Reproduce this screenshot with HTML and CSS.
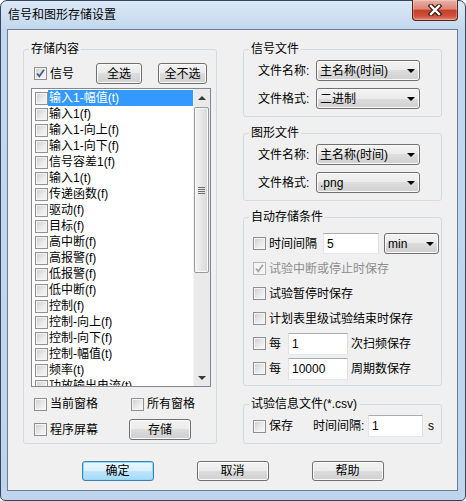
FILE: index.html
```html
<!DOCTYPE html>
<html lang="zh">
<head>
<meta charset="utf-8">
<title>信号和图形存储设置</title>
<link rel="stylesheet" href="styles.css">
</head>
<body>
<div class="window">
  <div class="titlebar">
    <span class="title">信号和图形存储设置</span>
    <div class="close">
      <svg width="14" height="12" viewBox="0 0 14 12"><path d="M3 2 L11 10 M11 2 L3 10" stroke="#3a1712" stroke-width="4.6" stroke-linecap="square" fill="none"/><path d="M3 2 L11 10 M11 2 L3 10" stroke="#fff" stroke-width="2.4" stroke-linecap="square" fill="none"/></svg>
    </div>
  </div>
  <div class="client">
    <div class="main">
      <fieldset class="group left-group">
        <legend>存储内容</legend>
        <div class="sig-row">
          <label class="chk sig-chk"><span class="cb"><svg width="11" height="11" viewBox="0 0 11 11"><path d="M2 5.5 L4.3 8.3 L9 1.8" stroke="#3f5a92" stroke-width="1.7" fill="none"/></svg></span>信号</label>
          <button class="btn btn-all">全选</button>
          <button class="btn btn-none">全不选</button>
        </div>
        <div class="listbox">
          <div class="items">
            <div class="item"><span class="cb"></span><span class="txt sel">输入1-幅值(t)</span></div>
            <div class="item"><span class="cb"></span><span class="txt">输入1(f)</span></div>
            <div class="item"><span class="cb"></span><span class="txt">输入1-向上(f)</span></div>
            <div class="item"><span class="cb"></span><span class="txt">输入1-向下(f)</span></div>
            <div class="item"><span class="cb"></span><span class="txt">信号容差1(f)</span></div>
            <div class="item"><span class="cb"></span><span class="txt">输入1(t)</span></div>
            <div class="item"><span class="cb"></span><span class="txt">传递函数(f)</span></div>
            <div class="item"><span class="cb"></span><span class="txt">驱动(f)</span></div>
            <div class="item"><span class="cb"></span><span class="txt">目标(f)</span></div>
            <div class="item"><span class="cb"></span><span class="txt">高中断(f)</span></div>
            <div class="item"><span class="cb"></span><span class="txt">高报警(f)</span></div>
            <div class="item"><span class="cb"></span><span class="txt">低报警(f)</span></div>
            <div class="item"><span class="cb"></span><span class="txt">低中断(f)</span></div>
            <div class="item"><span class="cb"></span><span class="txt">控制(f)</span></div>
            <div class="item"><span class="cb"></span><span class="txt">控制-向上(f)</span></div>
            <div class="item"><span class="cb"></span><span class="txt">控制-向下(f)</span></div>
            <div class="item"><span class="cb"></span><span class="txt">控制-幅值(t)</span></div>
            <div class="item"><span class="cb"></span><span class="txt">频率(t)</span></div>
            <div class="item"><span class="cb"></span><span class="txt">功放输出电流(t)</span></div>
          </div>
          <div class="vscroll">
            <div class="sb-arrow up"></div>
            <div class="sb-thumb"><span class="grip"></span></div>
            <div class="sb-track"></div>
            <div class="sb-arrow down"></div>
          </div>
        </div>
        <div class="opt-grid">
          <label class="chk"><span class="cb"></span>当前窗格</label>
          <label class="chk"><span class="cb"></span>所有窗格</label>
          <label class="chk"><span class="cb"></span>程序屏幕</label>
          <button class="btn btn-save">存储</button>
        </div>
      </fieldset>

      <div class="right-col">
        <fieldset class="group file-group">
          <legend>信号文件</legend>
          <div class="frow"><span class="flabel">文件名称:</span><div class="select fsel"><span>主名称(时间)</span><span class="arr"></span></div></div>
          <div class="frow"><span class="flabel">文件格式:</span><div class="select fsel"><span>二进制</span><span class="arr"></span></div></div>
        </fieldset>
        <fieldset class="group file-group">
          <legend>图形文件</legend>
          <div class="frow"><span class="flabel">文件名称:</span><div class="select fsel"><span>主名称(时间)</span><span class="arr"></span></div></div>
          <div class="frow"><span class="flabel">文件格式:</span><div class="select fsel"><span>.png</span><span class="arr"></span></div></div>
        </fieldset>
        <fieldset class="group auto-group">
          <legend>自动存储条件</legend>
          <div class="arow">
            <label class="chk w70"><span class="cb"></span>时间间隔</label>
            <div class="input in-time">5</div>
            <div class="select msel"><span>min</span><span class="arr"></span></div>
          </div>
          <div class="arow">
            <label class="chk disabled"><span class="cb"><svg width="11" height="11" viewBox="0 0 11 11"><path d="M2 5.5 L4.3 8.3 L9 1.8" stroke="#a3a3a3" stroke-width="1.7" fill="none"/></svg></span>试验中断或停止时保存</label>
          </div>
          <div class="arow">
            <label class="chk"><span class="cb"></span>试验暂停时保存</label>
          </div>
          <div class="arow">
            <label class="chk"><span class="cb"></span>计划表里级试验结束时保存</label>
          </div>
          <div class="arow">
            <label class="chk w35"><span class="cb"></span>每</label>
            <div class="input in-count">1</div>
            <span class="after">次扫频保存</span>
          </div>
          <div class="arow">
            <label class="chk w35"><span class="cb"></span>每</label>
            <div class="input in-count">10000</div>
            <span class="after">周期数保存</span>
          </div>
        </fieldset>
        <fieldset class="group csv-group">
          <legend>试验信息文件(*.csv)</legend>
          <div class="crow">
            <label class="chk w60"><span class="cb"></span>保存</label>
            <span class="clabel">时间间隔:</span>
            <div class="input in-csv">1</div>
            <span class="unit">s</span>
          </div>
        </fieldset>
      </div>
    </div>
    <div class="actions">
      <button class="btn act default">确定</button>
      <button class="btn act">取消</button>
      <button class="btn act">帮助</button>
    </div>
  </div>
</div>
</body>
</html>
```
FILE: styles.css
```css
body {
  margin: 0;
  background: #ffffff;
  font-family: "Liberation Sans", "Noto Sans CJK SC", sans-serif;
  font-size: 12px;
  line-height: 16px;
  color: #000;
}

.window {
  box-sizing: border-box;
  width: 466px;
  height: 501px;
  border: 1px solid #34475d;
  border-radius: 7px 7px 5px 5px;
  background: linear-gradient(180deg, #dae8f6 0px, #c3d8ee 28px, #bed5ec 100%);
  padding: 0 7px 9px 6px;
  display: flex;
  flex-direction: column;
}

.titlebar {
  height: 28px;
  display: flex;
  justify-content: space-between;
  align-items: flex-start;
}

.title {
  margin: 7px 0 0 1px;
  line-height: 14px;
  font-size: 12px;
  color: #000;
}

.close {
  box-sizing: border-box;
  width: 46px;
  height: 21px;
  margin-top: -1px;
  border: 1px solid #5e2219;
  border-top: none;
  border-radius: 0 0 4px 4px;
  background: linear-gradient(180deg, #e9b1a5 0%, #dc8674 45%, #c4412b 52%, #cf5038 80%, #e08a76 100%);
  box-shadow: inset 0 0 0 1px rgba(255, 255, 255, 0.25);
  display: flex;
  align-items: center;
  justify-content: center;
}

.client {
  flex: 1;
  background: #f0f0f0;
  border: 1px solid #6b7e93;
  padding: 12px 15px 0 15px;
}

.main {
  display: flex;
  gap: 26px;
  align-items: flex-start;
}

.group {
  margin: 0;
  padding: 0;
  border: 1px solid #d3dbe1;
  border-radius: 3px;
  min-width: 0;
  box-sizing: border-box;
}

.group > legend {
  padding: 0 2px;
  margin-left: 5px;
  height: 14px;
  line-height: 14px;
}

/* checkbox */
.cb {
  box-sizing: border-box;
  width: 13px;
  height: 13px;
  flex: none;
  border: 1px solid #8f8f8f;
  background: linear-gradient(135deg, #cdcdcd 0%, #ececec 60%, #f8f8f8 100%);
  box-shadow: inset 0 0 0 1px #f5f5f5;
  display: flex;
  align-items: center;
  justify-content: center;
}

.chk {
  display: flex;
  align-items: center;
  white-space: nowrap;
}

.chk .cb {
  margin-right: 3px;
}

.chk.disabled {
  color: #8e8e8e;
}

.chk.disabled .cb {
  border-color: #b5b5b5;
  background: #f4f4f4;
}

/* buttons */
.btn {
  box-sizing: border-box;
  border: 1px solid #707070;
  border-radius: 3px;
  background: linear-gradient(180deg, #f3f3f3 0%, #ebebeb 50%, #dddddd 50%, #cfcfcf 100%);
  box-shadow: inset 0 0 0 1px #fbfbfb;
  font: inherit;
  line-height: 16px;
  color: #000;
  padding: 0;
  margin: 0;
  display: flex;
  align-items: center;
  justify-content: center;
}

.btn.default {
  border-color: #3c7fb1;
  background: linear-gradient(180deg, #eaf6fd 0%, #d9f0fc 50%, #bee6fd 50%, #a7d9f5 100%);
  box-shadow: inset 0 0 0 1px #8fdcfd;
}

/* left group */
.left-group {
  width: 194px;
  padding-bottom: 3px;
}

.sig-row {
  display: flex;
  align-items: center;
  height: 21px;
  margin-top: 7px;
  padding-left: 10px;
}

.sig-chk {
  width: 62px;
}

.btn-all {
  width: 46px;
  height: 21px;
}

.btn-none {
  width: 49px;
  height: 21px;
  margin-left: 16px;
}

.listbox {
  box-sizing: border-box;
  width: 180px;
  height: 299px;
  margin: 4px 0 0 7px;
  border: 1px solid #828790;
  background: #fff;
  display: flex;
}

.items {
  flex: 1;
  min-width: 0;
  overflow: hidden;
  padding-top: 1px;
}

.item {
  height: 16px;
  display: flex;
  align-items: center;
  white-space: nowrap;
}

.item .cb {
  margin-left: 3px;
  width: 13px;
  height: 13px;
}

.item .txt {
  padding-left: 1px;
  line-height: 16px;
}

.item .txt.sel {
  flex: 1;
  background: #3399ff;
  color: #fff;
}

.vscroll {
  box-sizing: border-box;
  width: 17px;
  flex: none;
  display: flex;
  flex-direction: column;
  background: #eaeaea;
  border-left: 1px solid #f3f3f3;
}

.sb-arrow {
  height: 17px;
  flex: none;
  display: flex;
  align-items: center;
  justify-content: center;
}

.sb-arrow.up::before {
  content: "";
  border-left: 4px solid transparent;
  border-right: 4px solid transparent;
  border-bottom: 4px solid #3a3a3a;
}

.sb-arrow.down::before {
  content: "";
  border-left: 4px solid transparent;
  border-right: 4px solid transparent;
  border-top: 4px solid #3a3a3a;
}

.sb-thumb {
  box-sizing: border-box;
  height: 166px;
  margin: 1px 1px 0 0;
  border: 1px solid #999;
  border-radius: 2px;
  background: linear-gradient(90deg, #f4f4f4 0%, #e6e6e6 50%, #d7d7d7 100%);
  box-shadow: inset 0 0 0 1px #fafafa;
  display: flex;
  align-items: center;
  justify-content: center;
}

.grip {
  width: 7px;
  height: 7px;
  background: repeating-linear-gradient(180deg, #707070 0, #707070 1px, transparent 1px, transparent 2px);
}

.sb-track {
  flex: 1;
}

.opt-grid {
  display: grid;
  grid-template-columns: 97px auto;
  grid-template-rows: 16px 21px;
  row-gap: 7px;
  align-items: center;
  margin-top: 9px;
  padding-left: 10px;
}

.btn-save {
  width: 62px;
  height: 21px;
  margin-left: -2px;
}

/* right column */
.right-col {
  width: 199px;
  display: flex;
  flex-direction: column;
  gap: 9px;
}

.file-group {
  padding: 4px 0 7px 14px;
}

.file-group > legend {
  margin-left: -9px;
}

.frow {
  display: flex;
  align-items: center;
  height: 21px;
}

.frow + .frow {
  margin-top: 7px;
}

.flabel {
  width: 58px;
  white-space: nowrap;
}

.select {
  box-sizing: border-box;
  height: 21px;
  border: 1px solid #707070;
  border-radius: 3px;
  background: linear-gradient(180deg, #f3f3f3 0%, #ebebeb 50%, #dddddd 50%, #cfcfcf 100%);
  box-shadow: inset 0 0 0 1px #fbfbfb;
  display: flex;
  align-items: center;
  padding-left: 3px;
  white-space: nowrap;
}

.select .arr {
  margin-left: auto;
  margin-right: 4px;
  border-left: 4px solid transparent;
  border-right: 4px solid transparent;
  border-top: 4px solid #000;
}

.fsel {
  width: 104px;
}

.auto-group {
  padding: 7px 0 4px 9px;
}

.auto-group > legend,
.csv-group > legend {
  margin-left: -4px;
}

.arow {
  height: 25px;
  display: flex;
  align-items: center;
}

.w70 { width: 70px; }
.w35 { width: 35px; }
.w60 { width: 60px; }

.input {
  box-sizing: border-box;
  background: #fff;
  border: 1px solid;
  border-color: #abadb3 #dbdfe6 #e3e9ef #e2e3ea;
  padding-left: 3px;
  display: flex;
  align-items: center;
}

.in-time {
  width: 56px;
  height: 21px;
}

.msel {
  width: 55px;
  margin-left: 5px;
}

.in-count {
  width: 60px;
  height: 22px;
}

.after {
  margin-left: 3px;
  white-space: nowrap;
}

.csv-group {
  margin-top: 2px;
  padding: 4px 0 6px 9px;
}

.crow {
  height: 22px;
  display: flex;
  align-items: center;
}

.clabel {
  width: 55px;
  white-space: nowrap;
}

.in-csv {
  width: 55px;
  height: 22px;
}

.unit {
  margin-left: 5px;
}

.actions {
  display: flex;
  justify-content: center;
  gap: 43px;
  margin-top: 17px;
}

.btn.act {
  width: 72px;
  height: 20px;
}
```
